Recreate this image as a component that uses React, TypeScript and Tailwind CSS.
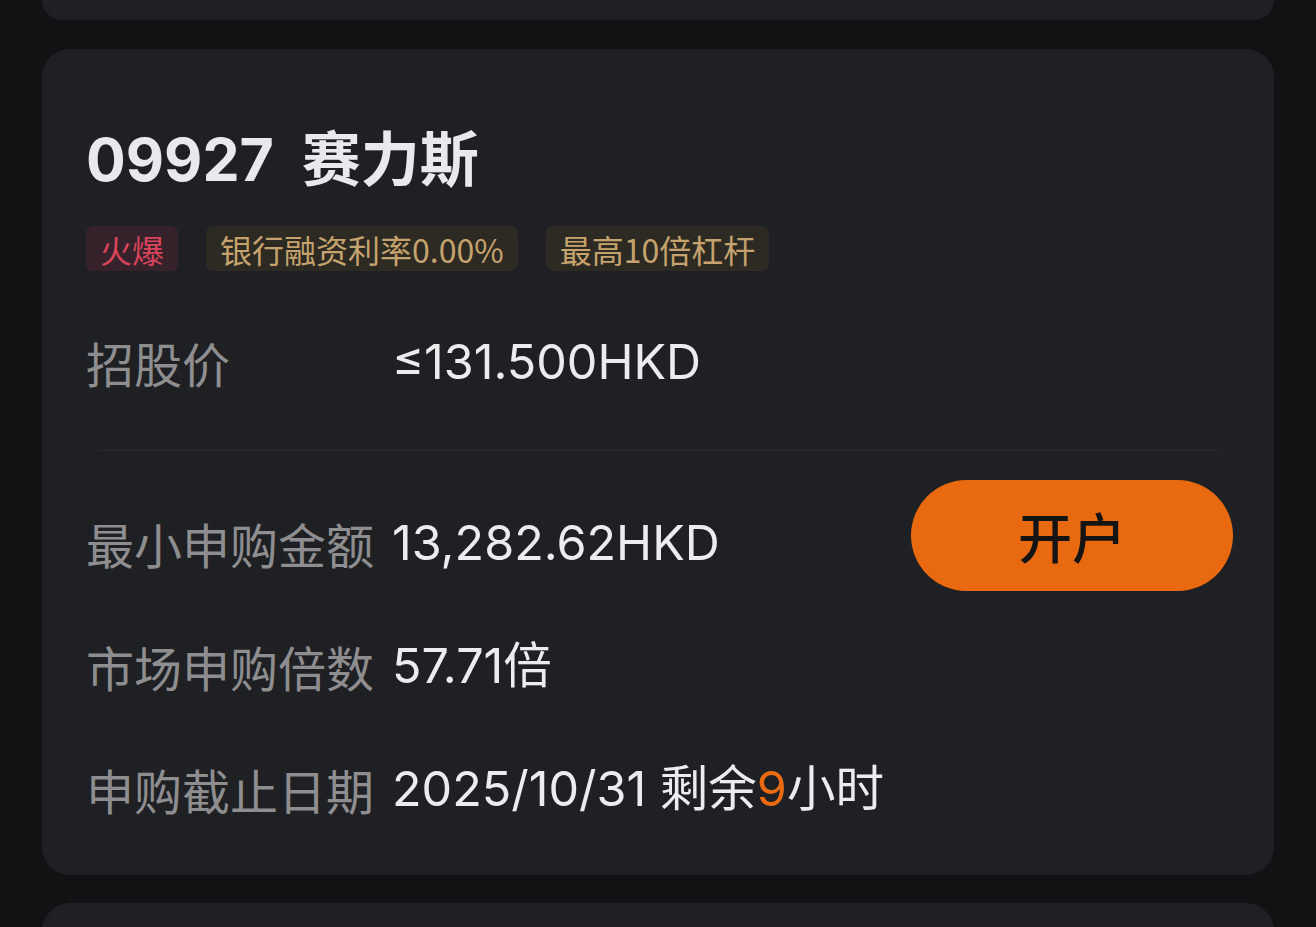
const latin = "font-['Inter','Noto_Sans_CJK_SC',sans-serif]";

function Tag({ text, tone }: { text: string; tone: 'hot' | 'gold' }) {
  const cls =
    tone === 'hot'
      ? 'bg-[#35222a] text-[#d9435a]'
      : 'bg-[#2d2a24] text-[#c6a36c]';
  return (
    <span className={`h-[45px] px-[14px] rounded-[7px] flex items-center text-[32px] leading-none ${cls}`}>
      {text}
    </span>
  );
}

function Row({ label, children }: { label: string; children: React.ReactNode }) {
  return (
    <div className="flex items-center h-[56px]">
      <span className="w-[306px] shrink-0 text-[48px] text-[#8e8e90] font-['Noto_Sans_CJK_SC',sans-serif]">{label}</span>
      <span className={`text-[48.5px] text-[#ececee] ${latin}`}>{children}</span>
    </div>
  );
}

export default function App() {
  return (
    <div className="h-[927px] overflow-hidden bg-[#111214] px-[42px] font-['Noto_Sans_CJK_SC',sans-serif]">
      <div className="h-[20px] bg-[#1f2023] rounded-b-[28px]" />

      <div className="mt-[29px] bg-[#1f2023] rounded-[28px] pl-[44px] pr-[41px] pt-[76px] pb-[58px]">
        <h1 className={`text-[59px] leading-[71px] font-bold text-[#e8e9ec] -mt-[1px] ${latin}`}>
          09927&nbsp; 赛力斯
        </h1>
        <div className="flex gap-[28px] mt-[31px]">
          <Tag text="火爆" tone="hot" />
          <Tag text="银行融资利率0.00%" tone="gold" />
          <Tag text="最高10倍杠杆" tone="gold" />
        </div>

        <div className="mt-[63px]">
          <Row label="招股价">≤131.500HKD</Row>
        </div>

        <div className="mt-[60px] ml-[12px] mr-[14px] h-px bg-[#2a2b2e]" />

        <div className="flex">
          <div className="flex-1 pt-[64px] flex flex-col gap-[67px]">
            <Row label="最小申购金额">13,282.62HKD</Row>
            <Row label="市场申购倍数">57.71倍</Row>
            <Row label="申购截止日期">
              2025/10/31 剩余<span className="text-[#ea6a12]">9</span>小时
            </Row>
          </div>
          <button className="mt-[29px] h-[111px] w-[322px] rounded-full bg-[#e8690f] text-[#141414] text-[54px] font-medium flex items-center justify-center">
            开户
          </button>
        </div>
      </div>

      <div className="mt-[28px] h-[60px] bg-[#1f2023] rounded-t-[28px]" />
    </div>
  );
}
